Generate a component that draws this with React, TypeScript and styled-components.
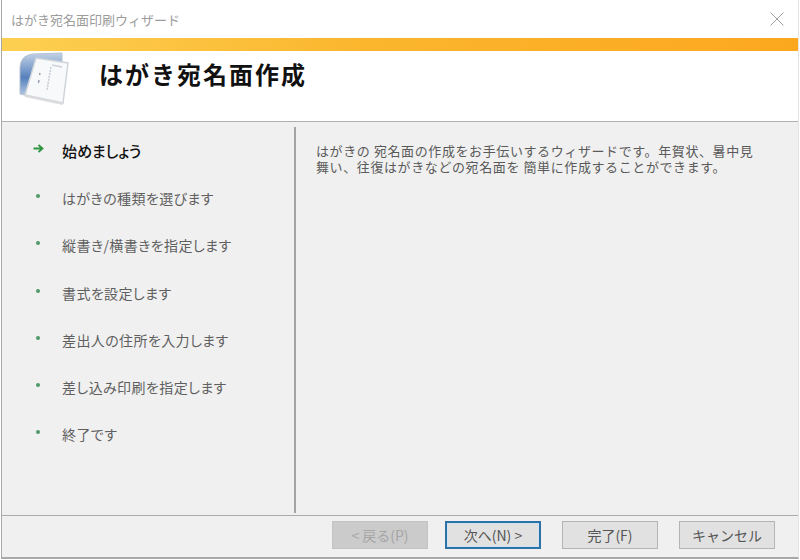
import * as React from "react";
import styled, { createGlobalStyle } from "styled-components";

const FONT = `"Noto Sans CJK JP", "Liberation Sans", sans-serif`;

const GlobalStyle = createGlobalStyle`
	html, body {
		margin: 0;
		padding: 0;
		background: #fff;
		font-family: ${FONT};
	}
`;

const Window = styled.div`
	display: flex;
	flex-direction: column;
	width: 798px;
	height: 559px;
	margin-left: 1px;
	box-sizing: border-box;
	border-left: 1px solid #a8a8a8;
	border-right: 1px solid #e4e4e4;
	border-bottom: 2px solid #a8a8a8;
	background: #f0f0f0;
`;

const TitleBar = styled.div`
	display: flex;
	align-items: center;
	justify-content: space-between;
	height: 38px;
	padding: 0 14px 0 9px;
	background: #fff;
`;

const TitleText = styled.span`
	font-size: 13px;
	color: #9c9c9c;
`;

const Banner = styled.div`
	height: 13px;
	background: linear-gradient(90deg, #fdd052 0%, #fbb62e 45%, #fca81f 100%);
`;

const Header = styled.div`
	display: flex;
	align-items: flex-start;
	height: 70px;
	padding-left: 16px;
	background: #fff;
	border-bottom: 1px solid #b0b0b0;
`;

const HeaderIcon = styled.svg`
	width: 54px;
	height: 54px;
	margin-top: 1px;
	filter: blur(0.5px);
`;

const HeaderTitle = styled.h1`
	margin: 5px 0 0 27px;
	font-size: 24px;
	line-height: 36px;
	font-weight: 700;
	letter-spacing: 2px;
	color: #111;
`;

const Body = styled.div`
	display: flex;
	flex: 1;
	min-height: 0;
	padding: 5px 0 2px;
`;

const Sidebar = styled.ul`
	display: flex;
	flex-direction: column;
	width: 292px;
	margin: 0;
	padding: 0;
	list-style: none;
	border-right: 2px solid #a4a4a4;
`;

const StepRow = styled.li`
	display: flex;
	align-items: center;
	height: 47.3px;
`;

const StepMarker = styled.span`
	display: flex;
	align-items: center;
	justify-content: center;
	width: 12px;
	margin: 0 18px 0 30px;
	transform: translateY(-2px);
`;

const Dot = styled.span`
	width: 4px;
	height: 4px;
	border-radius: 2px;
	background: #4f9a68;
`;

const StepLabel = styled.span<{ $active?: boolean }>`
	font-size: ${(p) => (p.$active ? "15px" : "14px")};
	font-weight: ${(p) => (p.$active ? 500 : 400)};
	letter-spacing: ${(p) => (p.$active ? "0" : "0.4px")};
	font-feature-settings: "palt";
	color: ${(p) => (p.$active ? "#111" : "#5f5f5f")};
`;

const Content = styled.div`
	flex: 1;
	padding: 16px 0 0 20px;
`;

const Description = styled.p`
	width: 440px;
	margin: 0;
	font-size: 13px;
	line-height: 16px;
	letter-spacing: 0.6px;
	color: #5a5a5a;
`;

const Footer = styled.div`
	display: flex;
	justify-content: flex-end;
	gap: 21px;
	height: 42px;
	box-sizing: border-box;
	padding: 5px 23px 0 0;
	border-top: 1px solid #ababab;
`;

const WizardButton = styled.button<{ $variant?: "default" | "focus" | "disabled" }>`
	width: 96px;
	height: 28px;
	margin-right: ${(p) => (p.$variant === "disabled" ? "-4px" : "0")};
	padding: 0;
	box-sizing: border-box;
	font-family: ${FONT};
	font-size: 14px;
	color: ${(p) => (p.$variant === "disabled" ? "#a6a6a6" : "#555")};
	background: ${(p) => (p.$variant === "disabled" ? "#cbcbcb" : "#e1e1e1")};
	border: ${(p) =>
		p.$variant === "focus"
			? "2px solid #2c72a6"
			: p.$variant === "disabled"
				? "1px solid #c4c4c4"
				: "1px solid #b4b4b4"};
	box-shadow: ${(p) => (p.$variant === "focus" ? "inset 0 0 0 1px #cfe4f3" : "none")};
`;

const steps = [
	"はがきの種類を選びます",
	"縦書き/横書きを指定します",
	"書式を設定します",
	"差出人の住所を入力します",
	"差し込み印刷を指定します",
	"終了です",
];

function PostcardIcon() {
	return (
		<HeaderIcon viewBox="0 0 54 54">
			<defs>
				<linearGradient id="cover" x1="0" y1="0" x2="0" y2="1">
					<stop offset="0" stopColor="#c3d2e6" />
					<stop offset="0.55" stopColor="#5580bd" />
					<stop offset="1" stopColor="#c3d3e8" />
				</linearGradient>
			</defs>
			<path d="M2 42 L2 15 Q3 3 15 2 L44 1 L44 10 L20 46 Z" fill="url(#cover)" stroke="#b4c0ce" strokeWidth="1" />
			<path d="M18 6 L50 11 L45 51 L7 43 Z" fill="#f8f9fb" stroke="#cfd4da" strokeWidth="1.5" />
			<path d="M33 15 L29 38" stroke="#c6ccd4" strokeWidth="1.5" strokeDasharray="2 1" />
			<path d="M34 13 L44 15" stroke="#ccd1d8" strokeWidth="1.5" />
			<path d="M22 21 L21.6 23 M21 28 L20.5 31" stroke="#8a95a3" strokeWidth="1.3" />
			<path d="M7 44 L45 52" stroke="#dcdcdc" strokeWidth="2" />
		</HeaderIcon>
	);
}

function App() {
	return (
		<>
			<GlobalStyle />
			<Window>
				<TitleBar>
					<TitleText>はがき宛名面印刷ウィザード</TitleText>
					<svg width="14" height="14" viewBox="0 0 14 14">
						<path d="M0.5 0.5 L13.5 13.5 M13.5 0.5 L0.5 13.5" stroke="#a0a0a0" strokeWidth="1" fill="none" />
					</svg>
				</TitleBar>
				<Banner />
				<Header>
					<PostcardIcon />
					<HeaderTitle>はがき宛名面作成</HeaderTitle>
				</Header>
				<Body>
					<Sidebar>
						<StepRow>
							<StepMarker>
								<svg width="11" height="9" viewBox="0 0 11 9">
									<path d="M0.5 4.5 H9 M5.5 1 L9.5 4.5 L5.5 8" stroke="#2f9440" strokeWidth="1.8" fill="none" />
								</svg>
							</StepMarker>
							<StepLabel $active>始めましょう</StepLabel>
						</StepRow>
						{steps.map((step) => (
							<StepRow key={step}>
								<StepMarker>
									<Dot />
								</StepMarker>
								<StepLabel>{step}</StepLabel>
							</StepRow>
						))}
					</Sidebar>
					<Content>
						<Description>
							はがきの 宛名面の作成をお手伝いするウィザードです。年賀状、暑中見舞い、往復はがきなどの宛名面を 簡単に作成することができます。
						</Description>
					</Content>
				</Body>
				<Footer>
					<WizardButton $variant="disabled">&lt; 戻る(P)</WizardButton>
					<WizardButton $variant="focus">次へ(N) &gt;</WizardButton>
					<WizardButton>完了(F)</WizardButton>
					<WizardButton>キャンセル</WizardButton>
				</Footer>
			</Window>
		</>
	);
}

export default App;
